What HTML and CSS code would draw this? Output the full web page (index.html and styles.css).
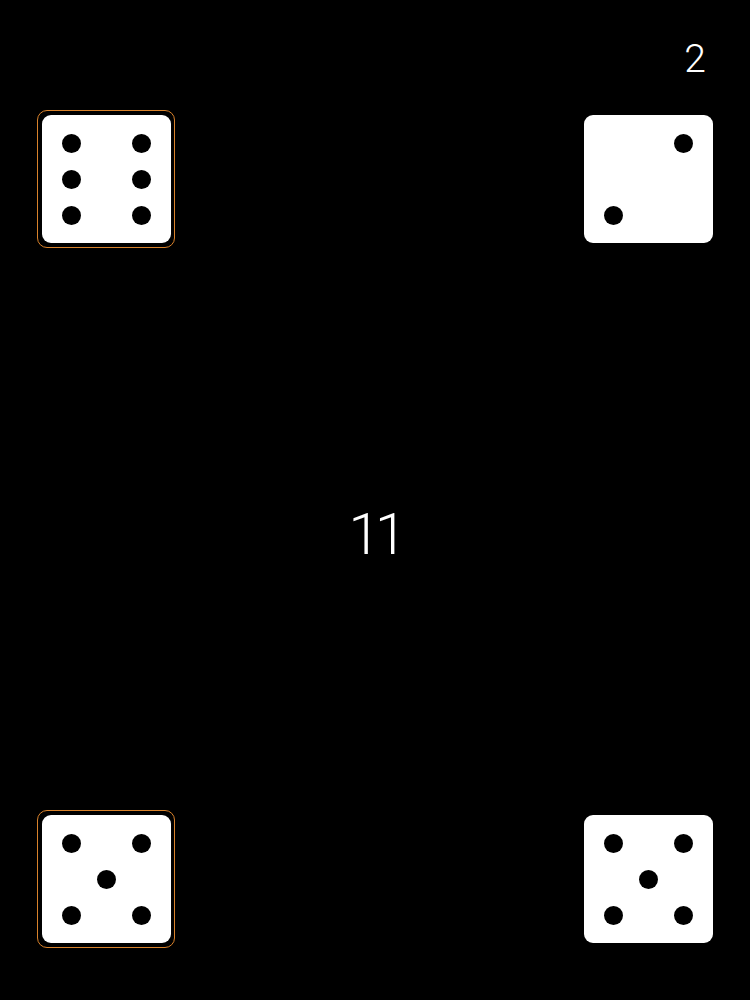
FILE: index.html
```html
<!DOCTYPE html>
<html lang="en">
<head>
    <meta charset="UTF-8">
    <meta name="viewport" content="width=device-width, initial-scale=1.0">
    <title>Dice</title>
    <link rel="stylesheet" href="styles.css">
</head>
<body>
    <div class="board">
        <div class="header">
            <span class="rolls">2</span>
        </div>

        <!-- Top dice -->
        <div class="dice-row">
            <div class="die held">
                <div class="face">
                    <span class="pip" style="grid-area: 1 / 1"></span>
                    <span class="pip" style="grid-area: 1 / 3"></span>
                    <span class="pip" style="grid-area: 2 / 1"></span>
                    <span class="pip" style="grid-area: 2 / 3"></span>
                    <span class="pip" style="grid-area: 3 / 1"></span>
                    <span class="pip" style="grid-area: 3 / 3"></span>
                </div>
            </div>
            <div class="die">
                <div class="face">
                    <span class="pip" style="grid-area: 1 / 3"></span>
                    <span class="pip" style="grid-area: 3 / 1"></span>
                </div>
            </div>
        </div>

        <div class="total">11</div>

        <!-- Bottom dice -->
        <div class="dice-row bottom">
            <div class="die held">
                <div class="face">
                    <span class="pip" style="grid-area: 1 / 1"></span>
                    <span class="pip" style="grid-area: 1 / 3"></span>
                    <span class="pip" style="grid-area: 2 / 2"></span>
                    <span class="pip" style="grid-area: 3 / 1"></span>
                    <span class="pip" style="grid-area: 3 / 3"></span>
                </div>
            </div>
            <div class="die">
                <div class="face">
                    <span class="pip" style="grid-area: 1 / 1"></span>
                    <span class="pip" style="grid-area: 1 / 3"></span>
                    <span class="pip" style="grid-area: 2 / 2"></span>
                    <span class="pip" style="grid-area: 3 / 1"></span>
                    <span class="pip" style="grid-area: 3 / 3"></span>
                </div>
            </div>
        </div>
    </div>
</body>
</html>
```

FILE: styles.css
```css
* {
    margin: 0;
    padding: 0;
    box-sizing: border-box;
}

body {
    background-color: #000;
    font-family: Roboto, "Liberation Sans", sans-serif;
    color: #fff;
}

.board {
    width: 750px;
    height: 1000px;
    display: flex;
    flex-direction: column;
}

.header {
    height: 110px;
    padding-top: 40px;
    padding-right: 44px;
    text-align: right;
}

.rolls {
    font-size: 39px;
    font-weight: 300;
    line-height: 1;
}

.dice-row {
    display: flex;
    justify-content: space-between;
    padding: 0 33px 0 37px;
}

.dice-row.bottom {
    padding-bottom: 52px;
}

.die {
    width: 138px;
    height: 138px;
    padding: 4px;
    border: 1.5px solid transparent;
    border-radius: 10px;
}

.die.held {
    border-color: #d9822b;
}

.face {
    width: 129px;
    height: 128px;
    background-color: #fff;
    border-radius: 9px;
    padding: 10px 12px;
    display: grid;
    grid-template-columns: repeat(3, 35px);
    grid-template-rows: repeat(3, 36px);
    place-items: center;
}

.pip {
    width: 19px;
    height: 19px;
    border-radius: 50%;
    background-color: #000;
}

.total {
    flex: 1;
    display: flex;
    align-items: center;
    justify-content: center;
    padding-top: 10px;
    font-size: 57px;
    font-weight: 300;
    line-height: 1;
    letter-spacing: -5px;
}
```
